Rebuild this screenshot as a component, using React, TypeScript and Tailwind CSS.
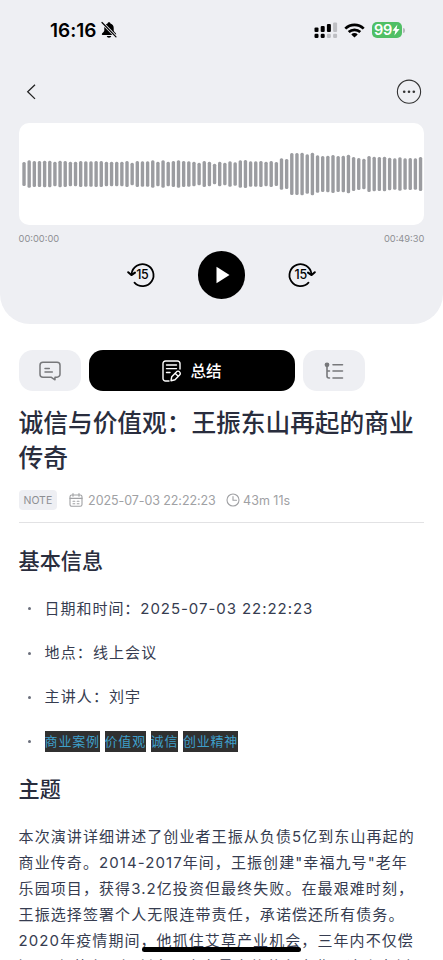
const CJK = 'font-["Inter","Noto_Sans_CJK_SC",sans-serif]';

// Top edge of every bar, as a distance from the middle line in thirds of a pixel.
const LEVELS = [
  36, 41, 39, 39, 40, 40, 37, 40, 39, 37, 37, 39, 38, 38, 39, 39, 37, 37, 37, 37,
  39, 34, 39, 38, 38, 41, 37, 41, 37, 39, 41, 39, 38, 37, 34, 39, 37, 31, 37, 34,
  38, 35, 41, 42, 38, 38, 39, 37, 39, 36, 47, 45, 63, 63, 64, 59, 64, 56, 54, 55,
  57, 54, 55, 58, 51, 48, 46, 54, 52, 51, 52, 49, 47, 50, 47, 48, 47, 51,
];

function StatusBar() {
  return (
    <div className="flex h-[60px] items-center pl-[50px] pr-[38.500px]">
      <span className="text-[19px] font-semibold leading-none tracking-[0.02px] text-black">16:16</span>
      <svg className="ml-[4px] h-[18px] w-[16px]" viewBox="0 0 16 18">
        <path d="M8 1.200c-.9 0-1.400.6-1.400 1.300C4.300 3.100 3.300 5 3.300 7v2.600C3.300 11 .8 12 .8 13.300c0 .5.3.8.8.8h12.800c.5 0 .8-.3.8-.8 0-1.300-2.500-2.300-2.500-3.700V7c0-2-1-3.900-3.300-4.500 0-.7-.5-1.300-1.400-1.300zM5.800 15h4.400c-.2 1-1 1.700-2.200 1.700s-2-.7-2.200-1.700z" />
        <path d="M1 1.500 15 15.800" stroke="#eeeff3" strokeWidth="2.800" />
        <path d="M1 1.500 15 15.800" stroke="#000" strokeWidth="1.200" strokeLinecap="round" />
      </svg>
      <svg className="ml-auto h-[17px] w-[24px]" viewBox="0 0 24 17">
        <g fill="#000">
          <rect x="0.500" y="5.500" width="4" height="4.500" rx="1.100" />
          <rect x="6.700" y="4" width="4" height="6" rx="1.100" />
          <rect x="12.900" y="2" width="4" height="8" rx="1.100" />
          <rect x="0.500" y="11.800" width="4" height="4.200" rx="1.200" />
          <rect x="6.700" y="11.800" width="4" height="4.200" rx="1.200" />
        </g>
        <g fill="#bebfc3">
          <rect x="19.100" y="0.500" width="4" height="9.500" rx="1.100" />
          <rect x="12.900" y="11.800" width="4" height="4.200" rx="1.200" />
          <rect x="19.100" y="11.800" width="4" height="4.200" rx="1.200" />
        </g>
      </svg>
      <svg className="ml-[6px] h-[15px] w-[21px]" viewBox="0 0 21 15">
        <g fill="none" stroke="#000" strokeWidth="2.700">
          <path d="M1.300 5.600a13.200 13.200 0 0 1 18.400 0" />
          <path d="M4.700 9.100a8.400 8.400 0 0 1 11.600 0" />
        </g>
        <path d="M10.500 14.600 7.300 11.400a4.600 4.600 0 0 1 6.400 0z" />
      </svg>
      <div className="ml-[7px] flex h-[16px] w-[30px] items-center justify-center rounded-[5px] bg-[#50bf65] text-[14.500px] font-semibold leading-none tracking-[-0.2px] text-white">
        99
        <svg className="h-[12px] w-[8px]" viewBox="0 0 8 12">
          <path d="M5.400.500.500 6.800h2.800L2.400 11.500 7.600 5H4.600z" fill="#fff" />
        </svg>
      </div>
      <div className="ml-[1px] h-[5px] w-[1.500px] rounded-r-full bg-[#b5b7bb]" />
    </div>
  );
}

function Skip({ forward = false }: { forward?: boolean }) {
  return (
    <svg className="h-[26px] w-[30px]" viewBox="0 0 30 26">
      <g transform={forward ? 'translate(30 0) scale(-1 1)' : undefined} fill="none" stroke="#000" strokeWidth="1.800" strokeLinecap="round" strokeLinejoin="round">
        <path d="M5.600 11.900A11 11 0 1 1 8.500 20.700" />
        <path d="m2.200 10.300 3.200 2.700 3.600-2.300" strokeWidth="2.100" />
      </g>
      <text x={forward ? 13.700 : 16.300} y="17.400" textAnchor="middle" fontFamily="Inter" fontSize="12.500" fontWeight="500" letterSpacing="-0.3">15</text>
    </svg>
  );
}

function Player() {
  return (
    <section className="h-[324px] rounded-b-[30px] bg-[#eeeff3]">
      <StatusBar />
      <div className="flex h-[63px] items-center justify-between pl-[26px] pr-[21px]">
        <svg className="h-[16px] w-[11px]" viewBox="0 0 11 16" fill="none" stroke="#222" strokeWidth="1.300">
          <path d="M9 .700 1.700 7.800 9 14.900" />
        </svg>
        <svg className="h-[26px] w-[26px]" viewBox="0 0 26 26">
          <circle cx="13" cy="12.700" r="11.600" fill="none" stroke="#333" strokeWidth="1.100" />
          <g fill="#333">
            <circle cx="8.200" cy="12.700" r="1.300" />
            <circle cx="13" cy="12.700" r="1.300" />
            <circle cx="17.800" cy="12.700" r="1.300" />
          </g>
        </svg>
      </div>
      <div className="mx-[18.600px] h-[102.400px] rounded-[10px] bg-white">
        <svg className="h-full w-full" viewBox="0 0 405.800 102.400">
          {LEVELS.map((level, i) => (
            <rect key={i} x={3.300 + i * 5.150} y={51 - level / 3} width="3.400" height={(level * 2) / 3} rx="1.500" fill="#9b9ca0" />
          ))}
        </svg>
      </div>
      <div className="mx-[18.600px] mt-[7px] flex justify-between text-[9.300px] leading-[14px] text-[#8e8f93]">
        <span>00:00:00</span>
        <span>00:49:30</span>
      </div>
      <div className="mt-[4.600px] flex items-center justify-center gap-[42px]">
        <Skip />
        <div className="flex h-[47.600px] w-[47.600px] items-center justify-center rounded-full bg-black">
          <svg className="ml-[3px] h-[18px] w-[14px]" viewBox="0 0 14 18">
            <path d="M.500.800 13.500 9 .500 17.200z" fill="#fff" />
          </svg>
        </div>
        <Skip forward />
      </div>
    </section>
  );
}

function Tabs() {
  return (
    <nav className="mt-[26px] flex gap-[8px]">
      <div className="flex h-[41.300px] w-[62px] items-center justify-center rounded-[14px] bg-[#eeeff3]">
        <svg className="h-[20px] w-[22px]" viewBox="0 0 22 20" fill="none" stroke="#77787b" strokeWidth="1.500" strokeLinecap="round" strokeLinejoin="round">
          <path d="M4 1.200h14a3 3 0 0 1 3 3v9a3 3 0 0 1-3 3h-2v2.600l-4-2.600H4a3 3 0 0 1-3-3v-9a3 3 0 0 1 3-3z" />
          <path d="M6 7.400h4.300M6 11h7.300" />
        </svg>
      </div>
      <div className="flex h-[41.300px] w-[206px] items-center justify-center gap-[9px] rounded-[14px] bg-black text-[15.500px] font-medium text-white">
        <svg className="h-[22px] w-[20px]" viewBox="0 0 20 22" fill="none" stroke="#fff" strokeWidth="1.400" strokeLinecap="round" strokeLinejoin="round">
          <path d="M7 21H3.500A2.500 2.500 0 0 1 1 18.500v-15A2.500 2.500 0 0 1 3.500 1h12A2.500 2.500 0 0 1 18 3.500V9M4.500 5h10M4.500 8.600h10M4.500 12.500H8" />
          <path d="m9.700 16.800 4.700-4.900a2.100 2.100 0 0 1 3.200 0 2.100 2.100 0 0 1 0 3.100L13 19.700l-4 1zM13.300 13.500l2.700 2.600" />
        </svg>
        <span className="pt-[1px]">总结</span>
      </div>
      <div className="flex h-[41.300px] w-[62px] items-center justify-center rounded-[14px] bg-[#eeeff3]">
        <svg className="h-[18px] w-[20px]" viewBox="0 0 20 18" fill="none" stroke="#77787b" strokeWidth="1.600" strokeLinecap="round">
          <circle cx="3" cy="2.800" r="1.600" fill="#77787b" />
          <path d="M3 3v11a2 2 0 0 0 2 2h.5M3 9h2.500M9 2.800h9.500M9 9h9.500M9 16h9.500" />
        </svg>
      </div>
    </nav>
  );
}

function Meta() {
  return (
    <div className="mt-[14px] flex h-[33px] items-start border-b border-[#e2e2e4] text-[12.500px] leading-[20px] text-[#a0a1a4]">
      <span className="flex h-[20px] w-[38.500px] items-center justify-center rounded-[4px] bg-[#eeeff3] pt-[2px] text-[10.500px] text-[#8d8e92]">NOTE</span>
      <svg className="ml-[12px] mt-[3px] h-[14px] w-[14px]" viewBox="0 0 14 14" fill="none" stroke="#a0a1a4" strokeWidth="1.100" strokeLinecap="round">
        <rect x="1" y="2" width="12" height="11.300" rx="1.800" />
        <path d="M1 5.400h12M4 .600v2.600M10 .600v2.600M4 8.200h1.800M8.200 8.200H10M4 10.800h1.800M8.200 10.800H10" />
      </svg>
      <span className="ml-[5px] w-[128px] whitespace-nowrap pt-[1px] tracking-[-0.08px]">2025-07-03 22:22:23</span>
      <svg className="ml-[10px] mt-[3px] h-[14px] w-[14px]" viewBox="0 0 14 14" fill="none" stroke="#a0a1a4" strokeWidth="1.100" strokeLinecap="round">
        <circle cx="7" cy="7" r="6" />
        <path d="M7 3.500V7.300h3.500" />
      </svg>
      <span className="ml-[3px] whitespace-nowrap pt-[1px]">43m 11s</span>
    </div>
  );
}

const TAGS = ['商业案例', '价值观', '诚信', '创业精神'];

const PARAGRAPH = [
  '本次演讲详细讲述了创业者王振从负债5亿到东山再起的',
  '商业传奇。2014-2017年间，王振创建"幸福九号"老年',
  '乐园项目，获得3.2亿投资但最终失败。在最艰难时刻，',
  '王振选择签署个人无限连带责任，承诺偿还所有债务。',
  '2020年疫情期间，他抓住艾草产业机会，三年内不仅偿',
  '还1.5亿债务，还创立了山东最大的艾灸企业。这个案例',
];

function Bullet({ children }: { children: React.ReactNode }) {
  return (
    <li className="flex h-[44.400px] items-center whitespace-nowrap">
      <span className="ml-[9px] mr-[14px] h-[3px] w-[3px] rounded-full bg-[#6b6f7c]" />
      {children}
    </li>
  );
}

export default function App() {
  return (
    <main className={`relative h-[960px] w-[443px] overflow-hidden bg-white text-[#363c50] ${CJK}`}>
      <Player />
      <div className="px-[18.600px]">
        <Tabs />
        <h1 className="mt-[14.700px] whitespace-nowrap text-[24.700px] font-medium leading-[35px] text-[#292d3d]">
          诚信与价值观：王振东山再起的商业
          <br />
          传奇
        </h1>
        <Meta />
        <h2 className="mt-[24px] text-[21.100px] font-medium leading-[30px] text-[#292d3d]">基本信息</h2>
        <ul className="mt-[9.500px] text-[15px] tracking-[1px]">
          <Bullet><span className="pt-[1px] tracking-[0.950px]">日期和时间：2025-07-03 22:22:23</span></Bullet>
          <Bullet><span className="tracking-[1.100px]">地点：线上会议</span></Bullet>
          <Bullet><span className="tracking-[1.100px]">主讲人：刘宇</span></Bullet>
          <Bullet>
            <span className="flex gap-[4.600px] text-[13px] leading-[21px] tracking-[0.830px] text-[#3e9fca]">
              {TAGS.map((tag) => (
                <span key={tag} className="h-[21px] bg-[#303030]">{tag}</span>
              ))}
            </span>
          </Bullet>
        </ul>
        <h2 className="mt-[10.500px] text-[21.100px] font-medium leading-[30px] text-[#292d3d]">主题</h2>
        <p className="mt-[19.300px] whitespace-nowrap text-[15px] leading-[26px] tracking-[1.080px]">
          {PARAGRAPH.map((line) => (
            <span key={line} className="block">{line}</span>
          ))}
        </p>
      </div>
      <div className="absolute bottom-[8px] left-[142px] h-[5px] w-[159px] rounded-full bg-black" />
    </main>
  );
}
